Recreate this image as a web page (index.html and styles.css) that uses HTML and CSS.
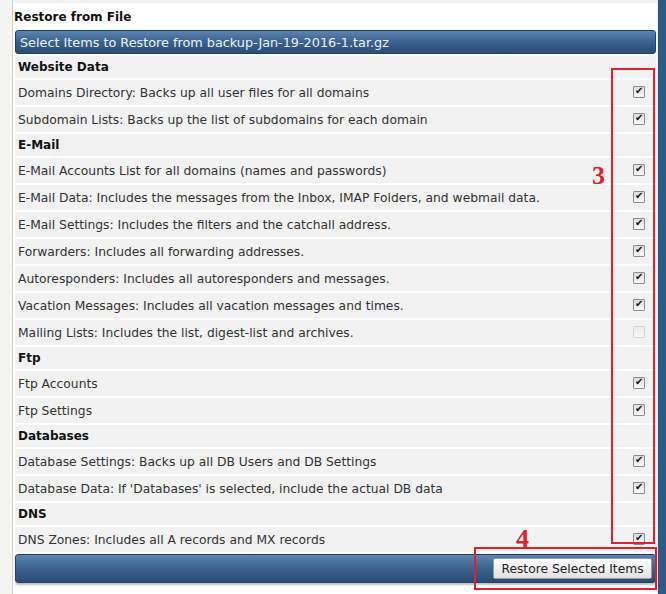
FILE: index.html
```html
<!DOCTYPE html>
<html lang="en">
<head>
    <meta charset="UTF-8">
    <title>Restore from File</title>
    <link rel="stylesheet" href="styles.css">
</head>
<body>
    <div class="page">
        <div class="side-left"></div>

        <div class="main">
            <h3 class="title">Restore from File</h3>

            <div class="bar bar-top">Select Items to Restore from backup-Jan-19-2016-1.tar.gz</div>

            <table class="items">
                <tr class="group"><td colspan="2">Website Data</td></tr>
                <tr><td>Domains Directory: Backs up all user files for all domains</td><td class="check"><input type="checkbox" checked></td></tr>
                <tr><td>Subdomain Lists: Backs up the list of subdomains for each domain</td><td class="check"><input type="checkbox" checked></td></tr>

                <tr class="group"><td colspan="2">E-Mail</td></tr>
                <tr><td>E-Mail Accounts List for all domains (names and passwords)</td><td class="check"><input type="checkbox" checked></td></tr>
                <tr><td>E-Mail Data: Includes the messages from the Inbox, IMAP Folders, and webmail data.</td><td class="check"><input type="checkbox" checked></td></tr>
                <tr><td>E-Mail Settings: Includes the filters and the catchall address.</td><td class="check"><input type="checkbox" checked></td></tr>
                <tr><td>Forwarders: Includes all forwarding addresses.</td><td class="check"><input type="checkbox" checked></td></tr>
                <tr><td>Autoresponders: Includes all autoresponders and messages.</td><td class="check"><input type="checkbox" checked></td></tr>
                <tr><td>Vacation Messages: Includes all vacation messages and times.</td><td class="check"><input type="checkbox" checked></td></tr>
                <tr><td>Mailing Lists: Includes the list, digest-list and archives.</td><td class="check"><input type="checkbox" disabled></td></tr>

                <tr class="group"><td colspan="2">Ftp</td></tr>
                <tr><td>Ftp Accounts</td><td class="check"><input type="checkbox" checked></td></tr>
                <tr><td>Ftp Settings</td><td class="check"><input type="checkbox" checked></td></tr>

                <tr class="group"><td colspan="2">Databases</td></tr>
                <tr><td>Database Settings: Backs up all DB Users and DB Settings</td><td class="check"><input type="checkbox" checked></td></tr>
                <tr><td>Database Data: If 'Databases' is selected, include the actual DB data</td><td class="check"><input type="checkbox" checked></td></tr>

                <tr class="group"><td colspan="2">DNS</td></tr>
                <tr><td>DNS Zones: Includes all A records and MX records</td><td class="check"><input type="checkbox" checked></td></tr>
            </table>

            <div class="bar bar-bottom">
                <button class="restore-btn">Restore Selected Items</button>
            </div>

            <!-- tutorial marks drawn over the form -->
            <div class="mark mark-checks"></div>
            <span class="mark-num num-3">3</span>
            <div class="mark mark-button"></div>
            <span class="mark-num num-4">4</span>
        </div>

        <div class="side-right"></div>
    </div>
</body>
</html>
```

FILE: styles.css
```css
body {
    margin: 0;
    background-color: #f4f4f0;
    font-family: "DejaVu Sans", Verdana, sans-serif;
    font-size: 12.3px;
    color: #333;
}
.page {
    display: flex;
    height: 594px;
    overflow: hidden;
}
.side-left {
    width: 12px;
    background-color: #f4f4f0;
    border-right: 1px solid #d0d0cc;
}
.side-right {
    width: 8px;
    background-color: #2e5886;
    border-left: 1px solid #e4e9ef;
}
.main {
    position: relative;
    flex: 1;
    background-color: #fff;
    padding: 0 1px 0 2px;
    border-top: 3px solid #f2f2f2;
}
.title {
    margin: 0;
    padding: 7px 0 0 0;
    height: 20px;
    margin-left: -1px;
    font-size: 12px;
    font-weight: bold;
    color: #111;
}
.bar {
    border-radius: 3px;
    background: linear-gradient(#5d84ae, #3c6592 45%, #2a4c73);
    border: 1px solid #23426a;
    box-sizing: border-box;
}
.bar-top {
    height: 24px;
    padding: 4px 4px 0 4px;
    color: #eef2f7;
    font-size: 12.8px;
}
.items {
    width: 100%;
    border-collapse: separate;
    border-spacing: 0 2px;
}
.items td {
    background-color: #f2f2f2;
    height: 25px;
    padding: 0 0 0 3px;
    box-sizing: border-box;
    white-space: nowrap;
}
.items .group td {
    height: 22px;
    font-weight: bold;
    font-size: 12px;
    color: #111;
}
.items .check {
    width: 40px;
    text-align: right;
    padding: 0 11px 0 0;
}
.check input {
    appearance: none;
    -webkit-appearance: none;
    width: 12px;
    height: 12px;
    margin: -2px 0 0 0;
    border: 1px solid #8d8d8d;
    border-radius: 1px;
    background: linear-gradient(#dcdcdc, #fafafa);
    position: relative;
    vertical-align: middle;
}
.check input:checked::after {
    content: "\2714";
    position: absolute;
    left: 1px;
    top: -2px;
    font-size: 10px;
    color: #111;
}
.check input:disabled {
    border-color: #d4d4d4;
    background: linear-gradient(#ececec, #f8f8f8);
}
.bar-bottom {
    margin-top: 0;
    height: 29px;
    display: flex;
    justify-content: flex-end;
    align-items: center;
    padding-right: 3px;
    box-shadow: 0 2px 2px rgba(0, 0, 0, 0.25);
}
.restore-btn {
    font-family: "DejaVu Sans", Verdana, sans-serif;
    font-size: 12.3px;
    color: #222;
    background: linear-gradient(#fdfdfd, #e2e2e2);
    border: 1px solid #9a9a9a;
    border-radius: 2px;
    height: 21px;
    width: 159px;
    padding: 0;
}
.mark {
    position: absolute;
    border: 2px solid #e0202c;
}
.mark-checks {
    left: 598px;
    top: 65px;
    width: 40px;
    height: 472px;
}
.mark-button {
    left: 461px;
    top: 544px;
    width: 179px;
    height: 39px;
}
.mark-num {
    position: absolute;
    font-family: "Liberation Serif", serif;
    font-weight: bold;
    font-size: 26px;
    color: #e0202c;
    line-height: 1;
}
.num-3 {
    left: 579px;
    top: 160px;
}
.num-4 {
    left: 503px;
    top: 523px;
}
```
